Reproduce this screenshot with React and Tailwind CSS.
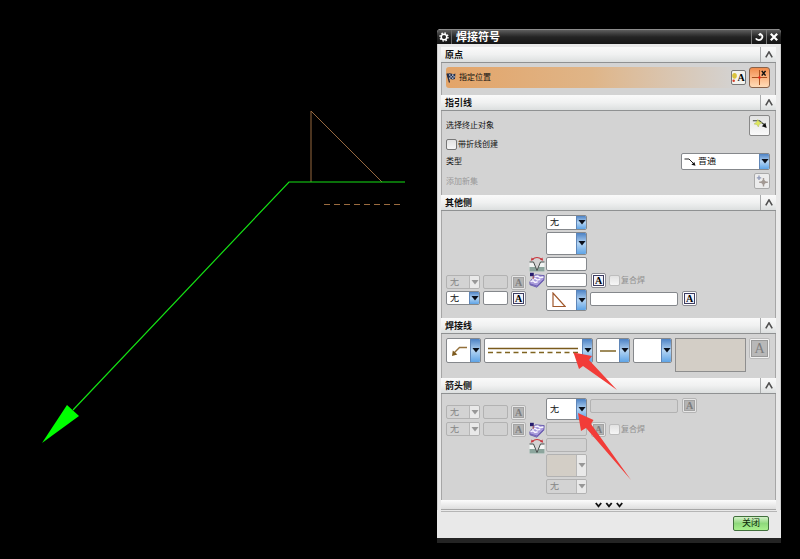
import React from 'react';
import clsx from 'clsx';

/* ---------- small drawings ---------- */

const GearIcon = () => (
  <svg viewBox="0 0 10 10" className="w-[10px] h-[10px]" fill="none" stroke="#fff">
    <circle cx="5" cy="5" r="2.8" strokeWidth="1.5" />
    <circle cx="5" cy="5" r="4" strokeWidth="1.4" strokeDasharray="1.5 1.64" />
  </svg>
);

const ResetIcon = () => (
  <svg viewBox="0 0 10 10" className="w-[10px] h-[10px]" fill="none" stroke="#fff" strokeWidth="1.8">
    <path d="M5.6 1.9C8.3 2.3 9 4.7 7.8 6.6C6.4 8.7 3 8.4 1.8 6.4" />
    <path d="M6.8 0.8L4 2.6L6.4 4.6Z" fill="#fff" stroke="none" />
  </svg>
);

const CloseIcon = () => (
  <svg viewBox="0 0 10 10" className="w-[10px] h-[10px]" stroke="#fff" strokeWidth="2.2">
    <path d="M1.8 1.8L8.2 8.2M8.2 1.8L1.8 8.2" />
  </svg>
);

const FlagIcon = () => (
  <svg viewBox="0 0 10 11" className="w-[10px] h-[11px] shrink-0">
    <path d="M1 1.5L3.5 10.5" stroke="#223" strokeWidth="1.2" />
    <path d="M1 2Q3 0.8 5 1.6T9.4 1.4L9 7Q7 7.8 5.4 7.2T2.4 7.8Z" fill="#26304a" />
    <path d="M3 2.2h1.5v1.6H3zM6 2.3h1.5v1.6H6zM4.4 3.9h1.5v1.6H4.4zM7.4 4h1.4v1.5H7.4zM3 5.6h1.4v1.3H3zM6 5.5h1.4v1.4H6z" fill="#a9b0c4" />
  </svg>
);

const CrosshairIcon = () => (
  <svg viewBox="0 0 20 20" className="w-[19px] h-[19px]" fill="none">
    <path d="M10 2V18M2 10H18" stroke="#a8501c" strokeWidth="1.1" />
    <path d="M12.4 3L16.4 8M16.4 3L12.4 8" stroke="#111" strokeWidth="1.6" />
    <circle cx="10" cy="10" r="1.3" fill="#f0241c" />
  </svg>
);

const TerminateIcon = () => (
  <svg viewBox="0 0 20 20" className="w-[19px] h-[19px]" fill="none">
    <path d="M3 5H10L15.5 9.5" stroke="#3c4438" strokeWidth="1.2" />
    <path d="M8.2 3.6L9.6 6.2L12.6 7.2L9.8 8.8L8.8 11.6L7.2 9L4.2 8.4L6.8 6.6Z" fill="#dfe85c" stroke="#b0b860" strokeWidth=".5" />
    <path d="M17.6 12.6L12.4 10.8L16.2 7.2Z" fill="#111" />
  </svg>
);

const AddSetIcon = () => (
  <svg viewBox="0 0 14 14" className="w-[14px] h-[14px]" fill="none">
    <path d="M4 1.5V6M1.8 3.8H6.2" stroke="#8f99b8" strokeWidth="1.3" />
    <path d="M8.5 4V12.5M4.2 8.2H12.8" stroke="#a39a94" strokeWidth="1.4" />
    <path d="M8.5 5.2L11.4 8.2L8.5 11.2L5.6 8.2Z" fill="#a39a94" />
  </svg>
);

const LeaderIcon = () => (
  <svg viewBox="0 0 12 10" className="w-[12px] h-[10px]" fill="none">
    <path d="M.5 2H5L10 7" stroke="#222" />
    <path d="M11.5 8.8L7.4 7.8L10.4 5Z" fill="#111" />
  </svg>
);

const LeaderLeftIcon = () => (
  <svg viewBox="0 0 18 14" className="w-[18px] h-[14px]" fill="none">
    <path d="M17 3.5H9.5L4 9" stroke="#94703a" strokeWidth="1.4" />
    <path d="M2 12L2.8 6.6L7.4 10.4Z" fill="#7c5a1e" />
  </svg>
);

const WeldLinesIcon = () => (
  <svg viewBox="0 0 91 8" className="w-[91px] h-[8px]" fill="none">
    <path d="M0 1.5H90" stroke="#7a5a1c" strokeWidth="1.4" />
    <path d="M0 5.5H90" stroke="#7f6420" strokeWidth="1.4" strokeDasharray="5 3.5" />
  </svg>
);

const ShortLineIcon = () => (
  <svg viewBox="0 0 16 4" className="w-[16px] h-[4px]">
    <path d="M0 2H16" stroke="#7f6426" strokeWidth="1.4" />
  </svg>
);

const FilletIcon = () => (
  <svg viewBox="0 0 14 16" className="w-[14px] h-[16px] mr-[6px]" fill="none" stroke="#a0582c">
    <path d="M1 1V14.5H13.2Z" strokeWidth="1.2" />
  </svg>
);

const GrooveIcon = () => (
  <svg viewBox="0 0 16 16" className="w-[16px] h-[16px]" fill="none">
    <path d="M.5 6H4.5L8 14.5L11.5 6H15.5V15.5H.5Z" fill="#f2f5f4" />
    <path d="M.5 11H6.5L8 14.5L9.5 11H15.5V15.5H.5Z" fill="#8ca59d" />
    <path d="M.5 6H4.5L8 14.5L11.5 6H15.5" stroke="#454c4a" />
    <path d="M3.2 3.4Q8 -0.4 12.8 3.4" stroke="#c9343c" strokeWidth="1.2" />
    <path d="M1.8 4.8L2.6 1.6L5 3.8ZM14.2 4.8L13.4 1.6L11 3.8Z" fill="#c9343c" />
  </svg>
);

const BeadIcon = () => (
  <svg viewBox="0 0 16 16" className="w-[16px] h-[16px]" fill="none">
    <path d="M.8 10L6.4 2.8L15.2 3.6L14.8 8.2L8 15.2L1 12.8Z" fill="#a99bdc" stroke="#5b4ea6" strokeWidth=".8" />
    <path d="M1.4 9.6L4 8.8L6 10.4L8.6 9.8M3.2 7.2L6.2 6.4L8.4 8L11.2 7.4M5.6 4.6L8.8 4L11 5.8L14.4 5" stroke="#f7f5ff" strokeWidth="1.4" />
    <path d="M1.4 12L8 14L14.4 7.6" stroke="#5b4ea6" strokeWidth=".7" />
    <path d="M1 .8H4.8V4.2H1Z" fill="#251c6e" />
    <path d="M4.2 3.8V7" stroke="#a64c50" />
  </svg>
);

/* ---------- controls ---------- */

function Combo({ label, value = '', disabled, className, icon, beige, iconAlign = 'justify-center', pad = 'pl-[3px]' }) {
  return (
    <div
      className={clsx(
        'relative shrink-0 rounded-[2px] border overflow-hidden',
        disabled ? 'border-[#b2b2b2]' : 'border-[#85888c]',
        disabled && !beige && 'bg-[#d3d3d3]',
        beige && 'bg-[#d3cec6]',
        !disabled && 'bg-white',
        className
      )}
    >
      <select
        aria-label={label}
        disabled={disabled}
        className={clsx(
          'block w-full h-full appearance-none bg-transparent opacity-100 text-[9px] leading-none outline-none',
          pad,
          disabled ? 'text-[#858585]' : 'text-[#111]'
        )}
      >
        <option>{value}</option>
      </select>
      {icon && (
        <span className={clsx('absolute inset-y-0 left-0 right-[10px] flex items-center pointer-events-none', iconAlign)}>
          {icon}
        </span>
      )}
      <span
        className={clsx(
          'absolute inset-y-0 right-0 w-[10px] border-l flex items-center justify-center pointer-events-none',
          disabled
            ? 'border-[#b8b8b8] bg-[#e9e9e9]'
            : 'border-[#5f86b8] bg-linear-to-b from-[#4d82c4] via-[#b4d4f2] to-[#5ea4e6]'
        )}
      >
        <svg viewBox="0 0 8 5" className="w-[8px] h-[5px]">
          <path d="M.5 0H7.5L4 4.6Z" fill={disabled ? '#979797' : '#0a0f1a'} />
        </svg>
      </span>
    </div>
  );
}

const Field = ({ label, disabled, className }) => (
  <input
    type="text"
    aria-label={label}
    disabled={disabled}
    className={clsx(
      'block min-w-0 shrink-0 rounded-[2px] border px-0.5 outline-none',
      disabled ? 'border-[#b2b2b2] bg-[#d1d1d1]' : 'border-[#85888c] bg-white',
      className
    )}
  />
);

const TextButton = ({ disabled }) => (
  <button
    type="button"
    aria-label="文本"
    disabled={disabled}
    className={clsx(
      'w-[15px] h-[15px] shrink-0 rounded-[2px] border p-px flex',
      disabled ? 'border-[#b4b4b4] bg-[#e6e6e6]' : 'border-[#8a8a92] bg-white'
    )}
  >
    <span
      className={clsx(
        "flex-1 self-stretch flex items-center justify-center border font-['Liberation_Serif',serif] font-bold text-[10px] leading-none",
        disabled ? 'border-[#a2a2a2] bg-[#b4b4b4] text-[#7c7c7c]' : 'border-[#3c3c60] bg-[#f2f2fa] text-black'
      )}
    >
      A
    </span>
  </button>
);

const Check = ({ children, disabled }) => (
  <label className={clsx('flex items-center gap-px', disabled ? 'text-[#909090]' : 'text-[#111]')}>
    <input
      type="checkbox"
      disabled={disabled}
      className={clsx(
        'appearance-none w-[11px] h-[11px] shrink-0 rounded-[2px] border bg-linear-to-b from-[#e2e2e2] to-[#f6f6f6]',
        disabled ? 'border-[#bdbdbd]' : 'border-[#777]'
      )}
    />
    {children}
  </label>
);

function Section({ title, className, children }) {
  return (
    <section>
      <header className="flex items-stretch h-4 border-b border-[#8f9192] bg-linear-to-b from-[#fafafa] via-[#f0f1f1] to-[#dcdfdf]">
        <h2 className="flex-1 pl-1 text-[9px] leading-[16px] font-bold text-[#111]">{title}</h2>
        <button type="button" aria-label={`折叠${title}`} className="w-4 border-l border-[#a9abac] flex items-center justify-center">
          <svg viewBox="0 0 8 7" className="w-[8px] h-[7px]" fill="none" stroke="#505050" strokeWidth="1.6">
            <path d="M.8 6.4L4 .9L7.2 6.4" />
          </svg>
        </button>
      </header>
      <div className={clsx('bg-[#d3d3d3] border-x border-[#a6a6a6] px-1', className)}>{children}</div>
    </section>
  );
}

const SizeRow = ({ disabled, name }) => (
  <div className="flex items-start gap-[3px]">
    <Combo label={`${name}前缀`} value="无" disabled={disabled} className="w-[34px] h-[14px]" />
    <Field label={`${name}尺寸`} disabled={disabled} className="w-[25px] h-[14px]" />
    <TextButton disabled={disabled} />
  </div>
);

/* ---------- graphics area ---------- */

const WeldDrawing = () => (
  <svg viewBox="0 0 437 559" className="flex-1 min-w-0 h-auto" fill="none">
    <path d="M311 182V111L382 182" stroke="#96683f" />
    <path d="M324 204.5H400" stroke="#9a6c40" strokeDasharray="6 4" />
    <path d="M405 182H289L73 410" stroke="#14e014" strokeWidth="1.2" />
    <path d="M42 443L67 405L79 416Z" fill="#00ff00" />
  </svg>
);

const PointerArrows = () => (
  <svg viewBox="437 29 344 514" className="absolute inset-0 w-full h-auto pointer-events-none" fill="#f23c38">
    <path d="M573.5 352.5L592 356L589 360L617 390L583 366L579 369Z" />
    <path d="M578 413L593.5 420L591 424L631 480L586 428L581 431Z" />
  </svg>
);

function WeldDialog() {
  return (
    <form
      onSubmit={(e) => e.preventDefault()}
      className="relative w-[344px] shrink-0 rounded-t-[4px] bg-[#e9e9e9] border-b-[5px] border-[#242424] overflow-hidden"
    >
      <header className="flex items-center h-[15px] pl-0.5 text-white border-t border-[#8b8b8b] bg-linear-to-b from-[#5e5e5e] via-[#242424] to-[#161616]">
        <GearIcon />
        <h1 className="flex-1 ml-[2px] pl-1 border-l border-[#666] text-[11px] leading-[14px] font-bold">焊接符号</h1>
        <button type="button" aria-label="重置" className="w-[15px] h-[14px] border-l border-[#777] flex items-center justify-center">
          <ResetIcon />
        </button>
        <button type="button" aria-label="关闭窗口" className="w-[15px] h-[14px] border-l border-[#777] flex items-center justify-center">
          <CloseIcon />
        </button>
      </header>

      <div className="border-x border-[#cfcfcf] pt-[3px] pl-[3px] pr-1">
        <Section title="原点" className="h-8 pt-1">
          <div className="flex items-center h-[21px] gap-[3px] pr-px rounded-[3px] bg-linear-to-r from-[#e3a468] via-[#dfb588] via-45% to-[#d3d3d3] to-90%">
            <FlagIcon />
            <span className="flex-1 text-[#111]">指定位置</span>
            <button type="button" aria-label="注释" className="w-[15px] h-[15px] rounded-[2px] border border-[#777] bg-[#f3f3ee] flex items-center justify-center">
              <svg viewBox="0 0 6 12" className="w-[5px] h-[11px]">
                <ellipse cx="3" cy="4" rx="2.8" ry="3.4" fill="#d9c23c" />
                <circle cx="2" cy="10" r="1.5" fill="#d8402c" />
              </svg>
              <span className="font-['Liberation_Serif',serif] font-bold text-[10px] leading-none text-black">A</span>
            </button>
            <button type="button" aria-label="指定原点" className="w-[21px] h-[21px] rounded-[3px] border border-[#8a6248] bg-linear-to-b from-[#f08c4c] via-[#fbb684] to-[#ffdcb8] flex items-center justify-center">
              <CrosshairIcon />
            </button>
          </div>
        </Section>

        <Section title="指引线" className="h-[84px] pt-1 pr-[5px] text-[#111]">
          <div className="flex items-center justify-between h-[21px]">
            <span>选择终止对象</span>
            <button type="button" aria-label="选择终止对象" className="w-[21px] h-[21px] rounded-[2px] border border-[#888] bg-linear-to-b from-[#e2e2e2] to-[#fafafa] flex items-center justify-center">
              <TerminateIcon />
            </button>
          </div>
          <div className="flex items-center h-[17px]">
            <Check>带折线创建</Check>
          </div>
          <div className="flex items-center justify-between h-[17px]">
            <span>类型</span>
            <Combo label="类型" value="普通" pad="pl-4" iconAlign="pl-[2px]" icon={<LeaderIcon />} className="w-[89px] h-[17px]" />
          </div>
          <div className="flex items-center justify-between h-4 mt-[3px] text-[#999]">
            <span>添加新集</span>
            <button type="button" disabled aria-label="添加新集" className="w-4 h-4 rounded-[2px] border border-[#aaa] bg-[#ececec] flex items-center justify-center">
              <AddSetIcon />
            </button>
          </div>
        </Section>

        <Section title="其他侧" className="flex items-end h-[107px] pb-[7px]">
          <div className="flex flex-col gap-px w-20 pb-[5px]">
            <SizeRow name="其他侧 1" disabled />
            <SizeRow name="其他侧 2" />
          </div>
          <div className="flex flex-col ml-[3px] pb-[23px]">
            <GrooveIcon />
            <BeadIcon />
          </div>
          <div className="flex flex-col gap-0.5 w-[41px] ml-px">
            <Combo label="轮廓" value="无" className="h-[15px]" />
            <Combo label="精加工" className="h-[23px]" />
            <Field label="坡口角度" className="h-[14px]" />
            <Field label="焊缝尺寸" className="h-[14px]" />
            <Combo label="焊缝类型" icon={<FilletIcon />} className="h-[22px]" />
          </div>
          <div className="flex flex-col gap-[3px] ml-[3px] pb-[5px]">
            <div className="flex items-center gap-[3px] pl-px">
              <TextButton />
              <Check disabled>复合焊</Check>
            </div>
            <div className="flex items-center gap-1">
              <Field label="长度" className="w-[88px] h-[14px]" />
              <TextButton />
            </div>
          </div>
        </Section>

        <Section title="焊接线" className="h-11 pt-1 pr-[5px]">
          <div className="flex items-start gap-[3px]">
            <Combo label="箭头样式" icon={<LeaderLeftIcon />} className="w-[35px] h-[25px]" />
            <Combo label="焊接线样式" icon={<WeldLinesIcon />} className="w-[109px] h-[25px]" />
            <Combo label="线型" icon={<ShortLineIcon />} className="w-[34px] h-[25px]" />
            <Combo label="尾部" className="w-[39px] h-[25px]" />
            <div className="flex-1 h-[34px] border border-[#8e8e8e] bg-[#d3cec6]" />
            <button type="button" disabled aria-label="尾部文本" className="w-[21px] h-[21px] rounded-[2px] border border-[#bbb] bg-[#f2f2f2] p-px flex">
              <span className="flex-1 self-stretch flex items-center justify-center border border-[#999] bg-[#b8b8b8] font-['Liberation_Serif',serif] text-[14px] leading-none text-[#7c7c7c]">A</span>
            </button>
          </div>
        </Section>

        <Section title="箭头侧" className="flex items-start h-[106px] pt-1">
          <div className="flex flex-col gap-0.5 w-20 pt-[7px]">
            <SizeRow name="箭头侧 1" disabled />
            <SizeRow name="箭头侧 2" disabled />
          </div>
          <div className="flex flex-col ml-[3px] pt-6">
            <BeadIcon />
            <GrooveIcon />
          </div>
          <div className="flex flex-col gap-0.5 w-[41px] ml-px">
            <Combo label="焊缝类型" value="无" className="h-[22px]" />
            <Field label="焊缝尺寸" disabled className="h-[14px]" />
            <Field label="坡口角度" disabled className="h-[14px]" />
            <Combo label="精加工" disabled beige className="h-[23px]" />
            <Combo label="轮廓" value="无" disabled className="h-[15px]" />
          </div>
          <div className="flex flex-col gap-[9px] ml-[3px]">
            <div className="flex items-center gap-1">
              <Field label="长度" disabled className="w-[88px] h-[14px]" />
              <TextButton disabled />
            </div>
            <div className="flex items-center gap-[3px] pl-px">
              <TextButton disabled />
              <Check disabled>复合焊</Check>
            </div>
          </div>
        </Section>

        <button
          type="button"
          aria-label="更多"
          className="flex items-center justify-center w-full h-[10px] border-b border-[#a6a6a6] bg-linear-to-b from-[#fcfcfc] to-[#dedede]"
        >
          <svg viewBox="0 0 28 6" className="w-[28px] h-[6px]" fill="none" stroke="#111" strokeWidth="1.8">
            <path d="M.8 1L3.5 4.4L6.2 1M11.3 1L14 4.4L16.7 1M21.8 1L24.5 4.4L27.2 1" />
          </svg>
        </button>
      </div>

      <footer className="flex justify-end mt-px mx-1 pt-1 pb-[7px] pr-2 border-t border-[#b5b5b5]">
        <button type="submit" className="w-9 h-[15px] rounded-[2px] border border-[#41703c] bg-linear-to-b from-[#d3f0c8] via-[#8fd97c] to-[#a8f08c] text-[9px] leading-none text-[#0c2a08]">
          关闭
        </button>
      </footer>

      <PointerArrows />
    </form>
  );
}

function App() {
  return (
    <main className="flex items-start min-h-screen bg-black font-['Liberation_Sans','Noto_Sans_CJK_SC',sans-serif] text-[8px] leading-[11px]">
      <WeldDrawing />
      <div className="shrink-0 pt-[29px] pr-[19px]">
        <WeldDialog />
      </div>
    </main>
  );
}

export default App;
